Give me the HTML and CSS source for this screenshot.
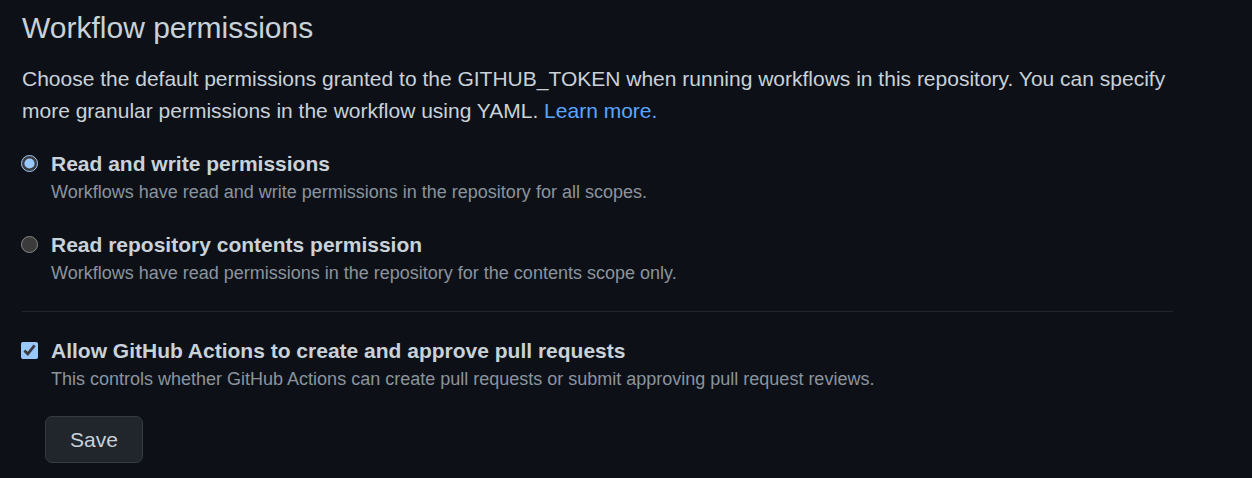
FILE: index.html
```html
<!DOCTYPE html>
<html lang="en">
<head>
<meta charset="utf-8">
<title>Workflow permissions</title>
<link rel="stylesheet" href="styles.css">
</head>
<body>
<main class="section">
  <h2 class="heading">Workflow permissions</h2>
  <p class="intro">Choose the default permissions granted to the GITHUB_TOKEN when running workflows in this repository. You can specify more granular permissions in the workflow using YAML. <a class="link" href="#">Learn more.</a></p>

  <div class="option">
    <input class="control" type="radio" name="perm" id="rw" checked>
    <div class="option-body">
      <label class="option-label" for="rw">Read and write permissions</label>
      <p class="option-note">Workflows have read and write permissions in the repository for all scopes.</p>
    </div>
  </div>

  <div class="option">
    <input class="control" type="radio" name="perm" id="ro">
    <div class="option-body">
      <label class="option-label" for="ro">Read repository contents permission</label>
      <p class="option-note">Workflows have read permissions in the repository for the contents scope only.</p>
    </div>
  </div>

  <hr class="divider">

  <div class="option">
    <input class="control" type="checkbox" id="pr" checked>
    <div class="option-body">
      <label class="option-label" for="pr">Allow GitHub Actions to create and approve pull requests</label>
      <p class="option-note">This controls whether GitHub Actions can create pull requests or submit approving pull request reviews.</p>
    </div>
  </div>

  <div class="actions">
    <button class="btn" type="button">Save</button>
  </div>
</main>
</body>
</html>
```
FILE: styles.css
```css
html, body {
  margin: 0;
  padding: 0;
  background: #0d1117;
}
body {
  font-family: "Liberation Sans", Arial, sans-serif;
  color: #c9d1d9;
  color-scheme: dark;
}
.section {
  width: 1151px;
  padding: 0 0 0 22px;
}
.heading {
  margin: 0;
  padding-top: 10px;
  font-size: 30px;
  font-weight: 400;
  line-height: 36px;
  color: #c9d1d9;
}
.intro {
  margin: 17px 0 0 0;
  font-size: 21px;
  line-height: 32px;
}
.link {
  color: #58a6ff;
  text-decoration: none;
}
.option {
  display: flex;
  align-items: flex-start;
  margin-top: 23px;
}
.option + .option {
  margin-top: 25px;
}
.divider + .option {
  margin-top: 25px;
}
.control {
  width: 17px;
  height: 17px;
  margin: 5px 13px 0 -1px;
  flex: none;
}
.option-label {
  display: block;
  font-size: 21px;
  font-weight: 700;
  line-height: 28px;
  color: #c9d1d9;
}
.option-note {
  margin: 0;
  font-size: 18px;
  line-height: 28px;
  color: #8b949e;
}
.divider {
  border: 0;
  border-top: 1px solid #21262d;
  margin: 24px 0 0 0;
}
.actions {
  padding: 23px 0 0 23px;
}
.btn {
  font-family: inherit;
  font-size: 21px;
  color: #c9d1d9;
  background: #21262d;
  border: 1px solid #363b42;
  border-radius: 7px;
  width: 98px;
  height: 47px;
  padding: 0;
}
```
